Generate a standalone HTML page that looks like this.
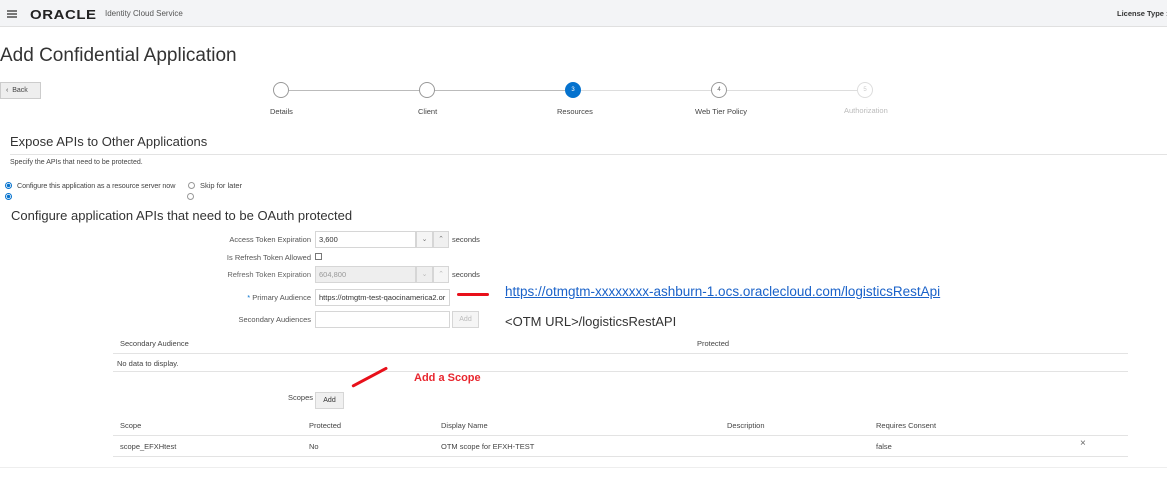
<!DOCTYPE html>
<html><head><style>
*{margin:0;padding:0;box-sizing:border-box}
body{width:1167px;height:481px;background:#fff;font-family:"Liberation Sans",sans-serif;color:#333;position:relative;overflow:hidden}
.a{position:absolute;white-space:nowrap}
.s{font-size:7.5px;color:#444}
.hl{position:absolute;height:1px;background:#e3e3e3}
.circ{position:absolute;width:16px;height:16px;border-radius:50%;border:1.5px solid #999;background:#fff;font-size:6px;text-align:center;line-height:13px;color:#666;display:flex;align-items:center;justify-content:center}
.inp{position:absolute;height:17px;border:1px solid #d6d6d6;background:#fff;font-size:7.5px;line-height:15px;padding-left:3px;color:#333}
.btn{position:absolute;height:17px;border:1px solid #d6d6d6;background:#f0f0f0;font-size:7px;text-align:center;line-height:15px;color:#777}
.lbl{position:absolute;font-size:7.5px;color:#555;text-align:right;width:200px;white-space:nowrap}
</style></head><body>
<div class="a" style="left:0;top:0;width:1167px;height:27px;background:#f3f4f6;border-bottom:1px solid #e0e0e0"></div>
<div class="a" style="left:7px;top:10px;width:10px;height:1.5px;background:#777;box-shadow:0 3px 0 #777,0 6px 0 #777"></div>
<div class="a" style="left:30px;top:7px;font-size:13px;font-weight:bold;letter-spacing:0.5px;color:#222;transform:scaleX(1.15);transform-origin:left">ORACLE</div>
<div class="a" style="left:105px;top:9px;font-size:8px;color:#555">Identity Cloud Service</div>
<div class="a" style="left:1117px;top:9px;font-size:7.5px;font-weight:bold;color:#333">License Type :</div>

<div class="a" style="left:0;top:45px;font-size:19px;color:#333">Add Confidential Application</div>
<div class="a" style="left:0;top:82px;width:41px;height:17px;background:#eee;border:1px solid #ccc;font-size:7px;line-height:15px;padding-left:5px;color:#444">&lsaquo;&nbsp; Back</div>

<div class="hl" style="left:289px;top:90px;width:276px;background:#bbb"></div>
<div class="hl" style="left:581px;top:90px;width:276px;background:#ddd"></div>
<div class="circ" style="left:273px;top:82px"></div>
<div class="circ" style="left:419px;top:82px"></div>
<div class="circ" style="left:565px;top:82px;background:#0572ce;border-color:#0572ce;color:#fff">3</div>
<div class="circ" style="left:711px;top:82px">4</div>
<div class="circ" style="left:857px;top:82px;border-color:#ddd;color:#ccc">5</div>
<div class="a s" style="left:270px;top:107px">Details</div>
<div class="a s" style="left:418px;top:107px">Client</div>
<div class="a s" style="left:557px;top:107px">Resources</div>
<div class="a s" style="left:695px;top:107px">Web Tier Policy</div>
<div class="a s" style="left:844px;top:106px;color:#bbb">Authorization</div>

<div class="a" style="left:10px;top:134px;font-size:13px;color:#333">Expose APIs to Other Applications</div>
<div class="hl" style="left:10px;top:154px;width:1157px"></div>
<div class="a" style="left:10px;top:159px;font-size:7px;color:#444">Specify the APIs that need to be protected.</div>
<div class="a" style="left:5px;top:182px;width:7px;height:7px;border-radius:50%;border:1px solid #0572ce;background:radial-gradient(#0572ce 45%,#fff 55%)"></div>
<div class="a" style="left:17px;top:181px;font-size:7.2px;color:#444;letter-spacing:-0.1px">Configure this application as a resource server now</div>
<div class="a" style="left:188px;top:182px;width:7px;height:7px;border-radius:50%;border:1px solid #999"></div>
<div class="a s" style="left:200px;top:181px">Skip for later</div>
<div class="a" style="left:5px;top:193px;width:7px;height:7px;border-radius:50%;border:1px solid #0572ce;background:radial-gradient(#0572ce 45%,#fff 55%)"></div>
<div class="a" style="left:187px;top:193px;width:7px;height:7px;border-radius:50%;border:1px solid #999"></div>
<div class="a" style="left:11px;top:208px;font-size:13px;color:#333">Configure application APIs that need to be OAuth protected</div>

<div class="lbl" style="left:111px;top:235px">Access Token Expiration</div>
<div class="inp" style="left:315px;top:231px;width:101px">3,600</div>
<div class="btn" style="left:416px;top:231px;width:17px;background:#f5f5f5">&#8964;</div>
<div class="btn" style="left:433px;top:231px;width:16px">&#8963;</div>
<div class="a s" style="left:452px;top:235px">seconds</div>
<div class="lbl" style="left:111px;top:253px">Is Refresh Token Allowed</div>
<div class="a" style="left:315px;top:253px;width:7px;height:7px;border:1px solid #777"></div>
<div class="lbl" style="left:111px;top:270px;color:#666">Refresh Token Expiration</div>
<div class="inp" style="left:315px;top:266px;width:101px;background:#eee;color:#999">604,800</div>
<div class="btn" style="left:416px;top:266px;width:17px;background:#eee;color:#bbb">&#8964;</div>
<div class="btn" style="left:433px;top:266px;width:16px;background:#f5f5f5;color:#bbb">&#8963;</div>
<div class="a s" style="left:452px;top:270px">seconds</div>
<div class="lbl" style="left:111px;top:293px"><span style="color:#0572ce">*</span> Primary Audience</div>
<div class="inp" style="left:315px;top:289px;width:135px;overflow:hidden">https://otmgtm-test-qaocinamerica2.or</div>
<div class="a" style="left:457px;top:293px;width:32px;height:3px;border-radius:2px;background:#e8101a"></div>
<div class="a" style="left:505px;top:284px;font-size:13.5px;color:#1a62c9;text-decoration:underline">https://otmgtm-xxxxxxxx-ashburn-1.ocs.oraclecloud.com/logisticsRestApi</div>
<div class="lbl" style="left:111px;top:315px">Secondary Audiences</div>
<div class="inp" style="left:315px;top:311px;width:135px"></div>
<div class="btn" style="left:452px;top:311px;width:27px;color:#bbb;background:#f5f5f5">Add</div>
<div class="a" style="left:505px;top:314px;font-size:13px;color:#333">&lt;OTM URL&gt;/logisticsRestAPI</div>

<div class="a s" style="left:120px;top:339px">Secondary Audience</div>
<div class="a s" style="left:697px;top:339px">Protected</div>
<div class="hl" style="left:113px;top:353px;width:1015px"></div>
<div class="a s" style="left:117px;top:359px">No data to display.</div>
<div class="hl" style="left:113px;top:371px;width:1015px"></div>
<div class="a" style="left:414px;top:372px;font-size:11px;font-weight:bold;color:#e8262e">Add a Scope</div>
<div class="a" style="left:352px;top:385px;width:40px;height:3px;border-radius:2px;background:#e8101a;transform:rotate(-28deg);transform-origin:left"></div>
<div class="a s" style="left:288px;top:393px">Scopes</div>
<div class="btn" style="left:315px;top:392px;width:29px;color:#333;background:#f0f0f0">Add</div>

<div class="a s" style="left:120px;top:421px">Scope</div>
<div class="a s" style="left:309px;top:421px">Protected</div>
<div class="a s" style="left:441px;top:421px">Display Name</div>
<div class="a s" style="left:727px;top:421px">Description</div>
<div class="a s" style="left:876px;top:421px">Requires Consent</div>
<div class="hl" style="left:113px;top:435px;width:1015px"></div>
<div class="a s" style="left:120px;top:442px">scope_EFXHtest</div>
<div class="a s" style="left:309px;top:442px">No</div>
<div class="a s" style="left:441px;top:442px">OTM scope for EFXH-TEST</div>
<div class="a s" style="left:876px;top:442px">false</div>
<div class="a" style="left:1080px;top:438px;font-size:10px;color:#666">&times;</div>
<div class="hl" style="left:113px;top:456px;width:1015px"></div>
<div class="hl" style="left:0;top:467px;width:1167px;background:#eee"></div>
</body></html>
